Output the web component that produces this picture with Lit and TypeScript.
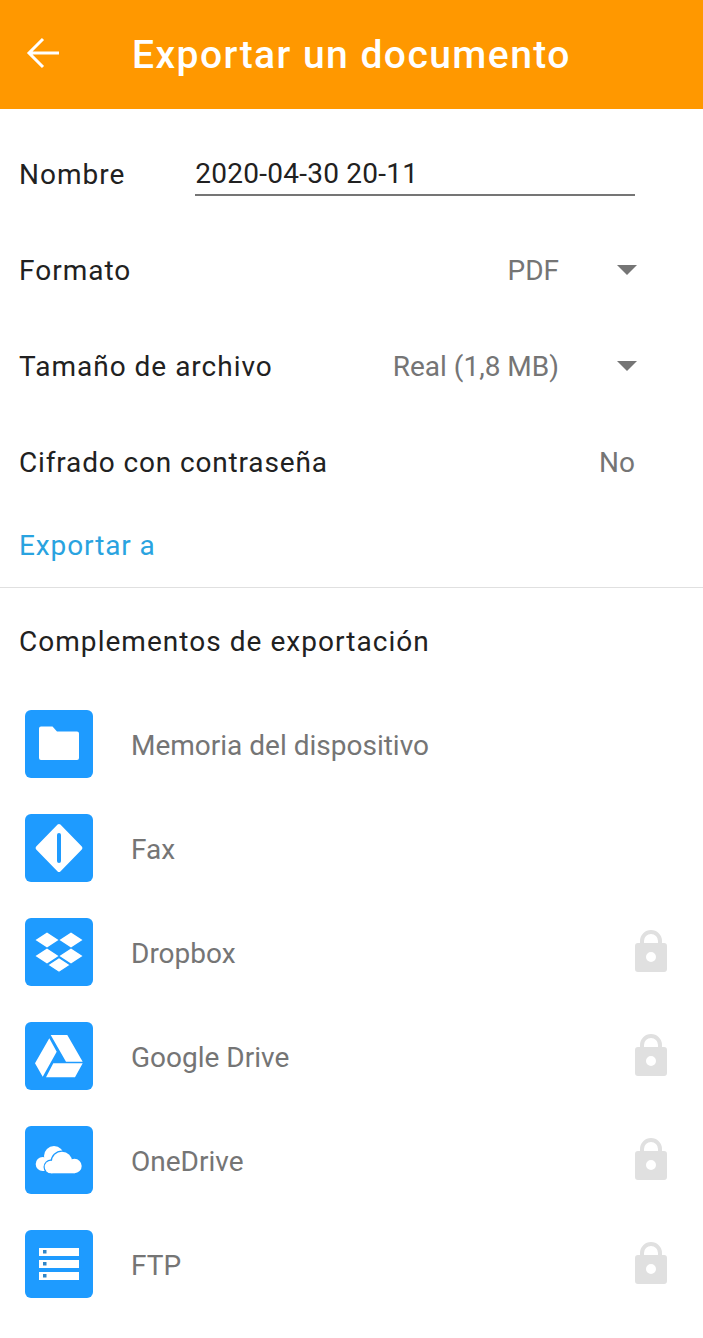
import { LitElement, html, css, svg } from "lit";
import { customElement } from "lit/decorators.js";

const BLUE = "#1e9bff";
const diamond = (cx: number, cy: number) =>
  `M${cx - 11.5} ${cy}L${cx} ${cy - 7.5}L${cx + 11.5} ${cy}L${cx} ${cy + 7.5}Z`;

const icons: Record<string, unknown> = {
  folder: svg`<path d="M14 18.500a2 2 0 0 1 2-2h11.500l4.500 5h20a2 2 0 0 1 2 2V48a2 2 0 0 1-2 2H16a2 2 0 0 1-2-2z" fill="#fff"/>`,
  fax: svg`<path d="M32.600 10.600a2 2 0 0 1 2.800 0l21.400 22a2 2 0 0 1 0 2.800L35.400 57.400a2 2 0 0 1-2.800 0L11.200 35.400a2 2 0 0 1 0-2.800z" fill="#fff"/><rect x="32" y="19" width="4" height="30" rx="2" fill="${BLUE}"/>`,
  dropbox: svg`<path fill="#fff" d="${diamond(22, 22) + diamond(46, 22) + diamond(22, 38) + diamond(46, 38)}"/><path fill="#fff" stroke="${BLUE}" stroke-width="1.400" d="${diamond(34, 47)}"/>`,
  drive: svg`<path fill="#fff" d="M25.700 13h16.600l15.400 26.700H41zM24.300 16.300l7.400 13.400-14 25L10 41.300zM28.300 41.300h29.400L50 55.300H21z"/>`,
  cloud: svg`<g fill="#fff"><circle cx="17.700" cy="38" r="7"/><circle cx="29" cy="30" r="10"/><path d="M17.700 36H32v9H17.700z"/></g>
    <g fill="${BLUE}" stroke="${BLUE}" stroke-width="2.400"><circle cx="26" cy="41" r="6.300"/><circle cx="37" cy="36" r="10.300"/><circle cx="49.500" cy="40" r="7.200"/></g>
    <g fill="#fff"><circle cx="26" cy="41" r="6.300"/><circle cx="37" cy="36" r="10.300"/><circle cx="49.500" cy="40" r="7.200"/><path d="M26 38h23.500v9.300H26z"/></g>`,
  ftp: svg`<path fill="#fff" d="M14 18h40v8H14zM14 30h40v8H14zM14 42h40v8H14z"/><path fill="#2f86c9" d="M18 20h3.500v3.500H18zM18 32h3.500v3.500H18zM18 44h3.500v3.500H18z"/>`,
};

const items = [
  { k: "folder", t: "Memoria del dispositivo", lock: false },
  { k: "fax", t: "Fax", lock: false },
  { k: "dropbox", t: "Dropbox", lock: true },
  { k: "drive", t: "Google Drive", lock: true },
  { k: "cloud", t: "OneDrive", lock: true },
  { k: "ftp", t: "FTP", lock: true },
];

@customElement("app-root")
export class AppRoot extends LitElement {
  static styles = css`
    :host {
      display: block;
      width: 703px;
      height: 1338px;
      background: #fff;
      font-family: Roboto, "Liberation Sans", sans-serif;
      overflow: hidden;
    }
    .bar {
      height: 109px;
      background: #ff9800;
      display: flex;
      align-items: center;
      padding-left: 26px;
      box-sizing: border-box;
    }
    .back { width: 34px; height: 32px; margin: 0 72px 3px 0; display: block; }
    .title {
      color: #fff;
      font-size: 39px;
      font-weight: 500;
      letter-spacing: 1.45px;
      white-space: nowrap;
    }
    .form { padding-top: 17px; }
    .row {
      height: 96px;
      display: flex;
      align-items: center;
      padding: 0 66px 0 19px;
      font-size: 28px;
      letter-spacing: 1px;
      color: #212121;
      box-sizing: border-box;
    }
    .label { flex: none; }
    .tight { letter-spacing: 0.85px; }
    .spacer { flex: 1; }
    .field {
      margin-left: 70px;
      width: 440px;
      height: 42px;
      border-bottom: 2px solid #757575;
      display: flex;
      align-items: center;
      letter-spacing: 0.25px;
    }
    .val { color: #757575; letter-spacing: 0; }
    .arrow { width: 20px; height: 10px; margin-left: 58px; display: block; }
    .no { margin-right: 2px; }
    .export {
      color: #29a3e0;
      font-size: 28px;
      letter-spacing: 0.9px;
      padding: 0 19px 6px;
      height: 78px;
      box-sizing: border-box;
      display: flex;
      align-items: center;
      border-bottom: 1px solid #e0e0e0;
    }
    .sec {
      height: 104px;
      padding: 3px 19px 0;
      font-size: 28px;
      letter-spacing: 1.04px;
      color: #212121;
      display: flex;
      align-items: center;
      box-sizing: border-box;
    }
    .item {
      height: 104px;
      display: flex;
      align-items: center;
      padding: 0 36px 0 25px;
      box-sizing: border-box;
    }
    .tile { width: 68px; height: 68px; display: block; flex: none; }
    .name {
      flex: 1;
      margin-left: 38px;
      font-size: 28px;
      color: #757575;
      padding-top: 2px;
    }
    .lock { width: 32px; height: 42px; display: block; flex: none; margin-top: -2px; }
  `;

  render() {
    return html`
      <div class="bar">
        <svg class="back" viewBox="0 0 34 32" fill="none" stroke="#fff" stroke-width="3">
          <path d="M33 16H4M17 2L3 16l14 14" />
        </svg>
        <div class="title">Exportar un documento</div>
      </div>
      <div class="form">
        <div class="row">
          <span class="label">Nombre</span>
          <div class="field">2020-04-30 20-11</div>
        </div>
        <div class="row">
          <span class="label">Formato</span><span class="spacer"></span>
          <span class="val">PDF</span>${this.arrow()}
        </div>
        <div class="row">
          <span class="label">Tamaño de archivo</span><span class="spacer"></span>
          <span class="val">Real (1,8 MB)</span>${this.arrow()}
        </div>
        <div class="row">
          <span class="label tight">Cifrado con contraseña</span><span class="spacer"></span>
          <span class="val no">No</span>
        </div>
      </div>
      <div class="export">Exportar a</div>
      <div class="sec">Complementos de exportación</div>
      ${items.map(
        (i) => html`
          <div class="item">
            <svg class="tile" viewBox="0 0 68 68">
              <rect width="68" height="68" rx="6" fill="${BLUE}" />
              ${icons[i.k]}
            </svg>
            <span class="name">${i.t}</span>
            ${i.lock
              ? html`<svg class="lock" viewBox="0 0 32 42">
                  <path fill="none" stroke="#e0e0e0" stroke-width="4" d="M7 16v-5a9 9 0 0 1 18 0v5" />
                  <path
                    fill="#e0e0e0"
                    fill-rule="evenodd"
                    d="M3 13h26a3 3 0 0 1 3 3v23a3 3 0 0 1-3 3H3a3 3 0 0 1-3-3V16a3 3 0 0 1 3-3zM16 22a5 5 0 1 0 0 10 5 5 0 0 0 0-10z"
                  />
                </svg>`
              : ""}
          </div>
        `
      )}
    `;
  }

  arrow() {
    return html`<svg class="arrow" viewBox="0 0 20 10"><path d="M0 0h20L10 10z" fill="#757575" /></svg>`;
  }
}
